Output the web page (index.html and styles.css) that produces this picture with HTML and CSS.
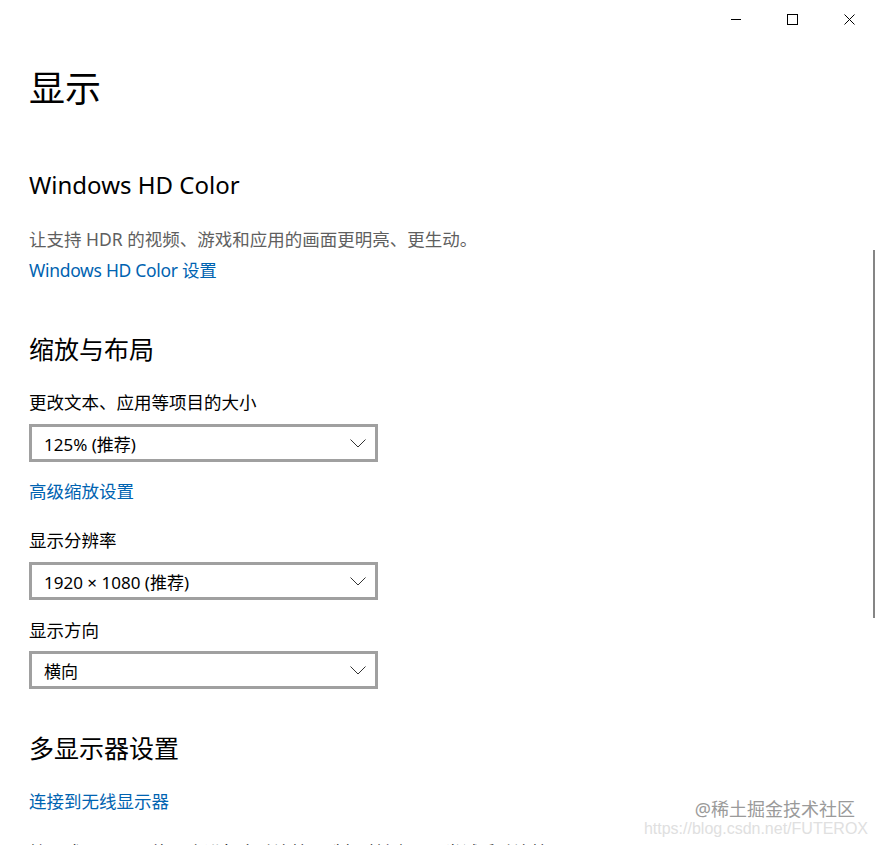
FILE: index.html
```html
<!DOCTYPE html>
<html lang="zh-CN">
<head>
  <meta charset="UTF-8" />
  <meta name="viewport" content="width=device-width, initial-scale=1.0"/>
  <title>显示</title>
  <link rel="stylesheet" href="styles.css">
</head>
<body>

  <!-- 标题栏按钮 -->
  <div class="titlebar">
    <div class="win-btn">
      <svg width="10" height="10" viewBox="0 0 10 10"><path d="M0 5.5h10" stroke="#000" stroke-width="1"/></svg>
    </div>
    <div class="win-btn">
      <svg width="11" height="11" viewBox="0 0 11 11"><rect x="0.5" y="0.5" width="10" height="10" fill="none" stroke="#000" stroke-width="1"/></svg>
    </div>
    <div class="win-btn">
      <svg width="11" height="11" viewBox="0 0 11 11"><path d="M0.5 0.5l10 10M10.5 0.5l-10 10" stroke="#000" stroke-width="1"/></svg>
    </div>
  </div>

  <div class="page">
    <h1>显示</h1>

    <h2 class="hd-title">Windows HD Color</h2>
    <p class="desc">让支持 HDR 的视频、游戏和应用的画面更明亮、更生动。</p>
    <a class="link link-hd">Windows HD Color 设置</a>

    <h2 class="sec-scale">缩放与布局</h2>
    <div class="label label-first">更改文本、应用等项目的大小</div>
    <div class="select">
      <span>125% (推荐)</span>
      <svg class="chevron" width="16" height="9" viewBox="0 0 16 9"><path d="M0.5 0.5l7.5 7.5 7.5-7.5" fill="none" stroke="#333" stroke-width="1"/></svg>
    </div>
    <a class="link link-adv">高级缩放设置</a>

    <div class="label label-res">显示分辨率</div>
    <div class="select">
      <span>1920 × 1080 (推荐)</span>
      <svg class="chevron" width="16" height="9" viewBox="0 0 16 9"><path d="M0.5 0.5l7.5 7.5 7.5-7.5" fill="none" stroke="#333" stroke-width="1"/></svg>
    </div>

    <div class="label label-dir">显示方向</div>
    <div class="select">
      <span>横向</span>
      <svg class="chevron" width="16" height="9" viewBox="0 0 16 9"><path d="M0.5 0.5l7.5 7.5 7.5-7.5" fill="none" stroke="#333" stroke-width="1"/></svg>
    </div>

    <h2 class="sec-multi">多显示器设置</h2>
    <a class="link link-wireless">连接到无线显示器</a>
    <p class="note">较旧式显示器可能不会进行自动连接。选择“检测”即可尝试手动连接。</p>
  </div>

  <div class="scrollbar"></div>

  <div class="watermark">
    <div class="wm-main">@稀土掘金技术社区</div>
    <div class="wm-url">https://blog.csdn.net/FUTEROX</div>
  </div>

</body>
</html>
```

FILE: styles.css
```css
html, body {
  margin: 0;
  height: 845px;
  overflow: hidden;
  background: #fff;
}

body {
  font-family: "Noto Sans", "Noto Sans CJK SC", sans-serif;
  color: #000;
  position: relative;
}

.titlebar {
  display: flex;
  justify-content: flex-end;
  height: 38px;
}

.win-btn {
  width: 57px;
  height: 38px;
  display: flex;
  align-items: center;
  justify-content: center;
}

.win-btn svg {
  display: block;
}

.page {
  padding: 0 29px;
}

h1 {
  margin: 27px 0 0;
  font-size: 36px;
  line-height: 48px;
  font-weight: 400;
}

h2 {
  margin: 0;
  font-size: 25px;
  line-height: 32px;
  font-weight: 400;
}

.hd-title {
  margin-top: 56px;
  font-size: 24px;
}

.desc {
  margin: 25px 0 0;
  font-size: 17.5px;
  line-height: 26px;
  color: #5f5f5f;
}

.link {
  display: block;
  font-size: 17.5px;
  line-height: 26px;
  color: #0063b1;
  cursor: pointer;
}

.link-hd {
  margin-top: 5px;
  letter-spacing: -0.3px;
}

.sec-scale {
  margin-top: 50px;
}

.label {
  font-size: 17.5px;
  line-height: 26px;
}

.label-first {
  margin-top: 24px;
}

.select {
  box-sizing: border-box;
  width: 349px;
  height: 38px;
  margin-top: 9px;
  border: 3px solid #a0a0a0;
  display: flex;
  align-items: center;
  justify-content: space-between;
  padding: 0 9px 0 12px;
  font-size: 17px;
}

.chevron {
  display: block;
}

.link-adv {
  margin-top: 16px;
}

.label-res {
  margin-top: 23px;
}

.label-dir {
  margin-top: 17px;
}

.label-dir + .select {
  margin-top: 8px;
}

.sec-multi {
  margin-top: 43px;
}

.link-wireless {
  margin-top: 24px;
}

.note {
  margin: 25px 0 0;
  font-size: 17.5px;
  line-height: 26px;
  white-space: nowrap;
}

.scrollbar {
  position: absolute;
  left: 873px;
  top: 250px;
  width: 2px;
  height: 368px;
  background: #858585;
}

.watermark {
  position: absolute;
  right: 10px;
  top: 798px;
  text-align: right;
}

.wm-main {
  font-size: 18px;
  line-height: 22px;
  color: #9a9a9a;
  margin-right: 13px;
}

.wm-url {
  font-family: "Liberation Sans", sans-serif;
  font-size: 16px;
  line-height: 18px;
  color: #e0e0e0;
}
```
